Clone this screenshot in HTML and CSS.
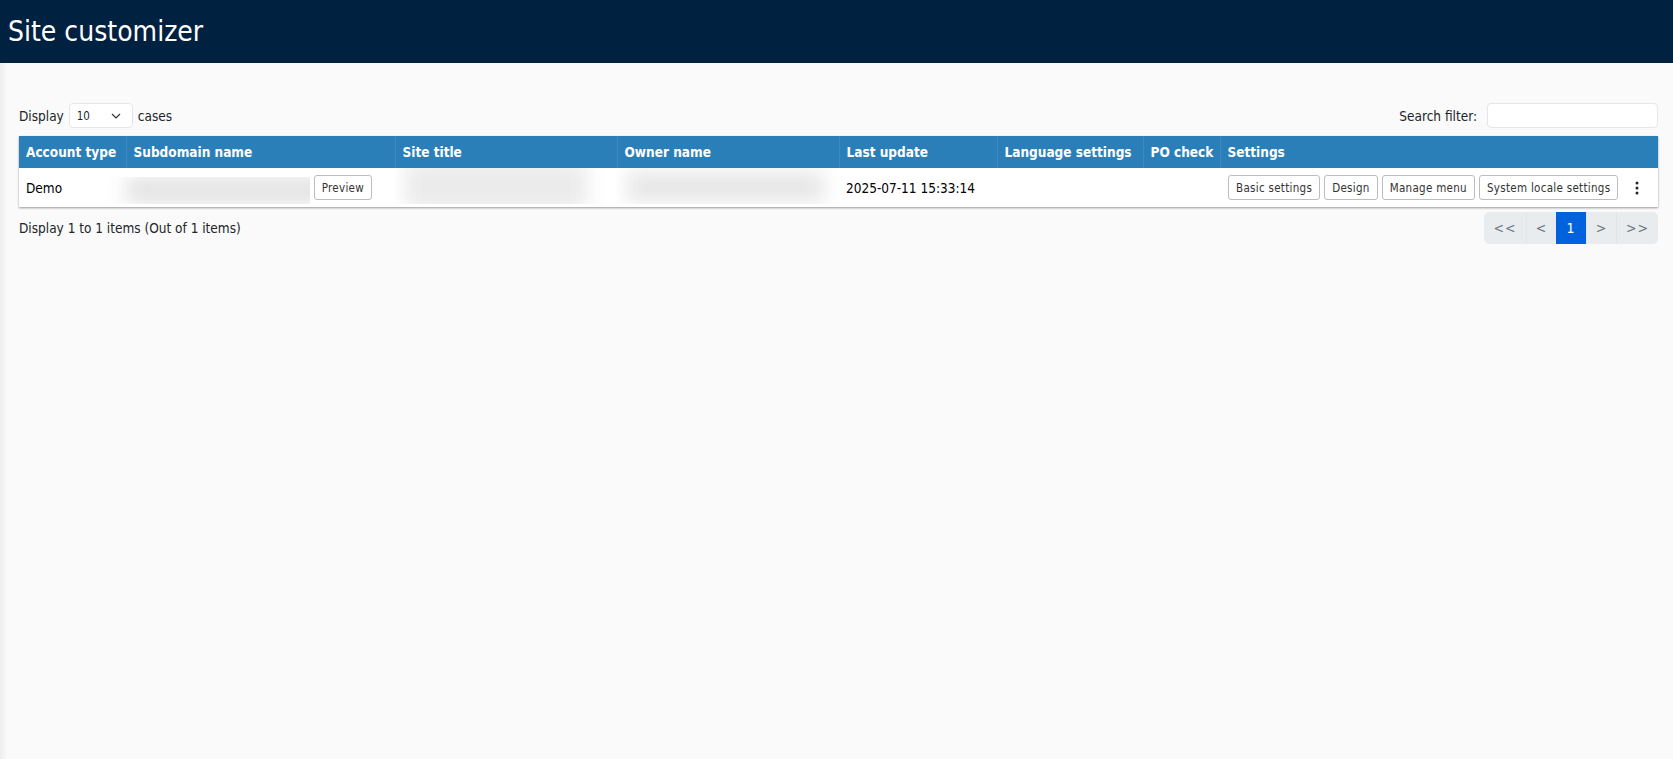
FILE: index.html
```html
<!DOCTYPE html>
<html lang="en">
<head>
<meta charset="utf-8">
<title>Site customizer</title>
<link rel="stylesheet" href="styles.css">
</head>
<body>
<header class="topbar"><h1 class="title">Site customizer</h1></header>
<main class="content">
  <div class="toolbar">
    <label class="length">Display
      <span class="select"><span>10</span>
        <svg class="chev" width="10" height="6" viewBox="0 0 10 6"><path d="M1 1l4 4 4-4" fill="none" stroke="#333" stroke-width="1.2"/></svg>
      </span>
      cases</label>
    <label class="search">Search filter:<span class="input"></span></label>
  </div>
  <table class="grid">
    <colgroup>
      <col class="c1"><col class="c2"><col class="c3"><col class="c4"><col class="c5"><col class="c6"><col class="c7"><col class="c8">
    </colgroup>
    <thead>
      <tr><th>Account type</th><th>Subdomain name</th><th>Site title</th><th>Owner name</th><th>Last update</th><th>Language settings</th><th>PO check</th><th>Settings</th></tr>
    </thead>
    <tbody>
      <tr>
        <td>Demo</td>
        <td class="sub"><div class="subwrap"><div class="mask m-sub"><i></i></div><button class="btn">Preview</button></div></td>
        <td class="blurcell"><div class="mask m-title"><i></i></div></td>
        <td class="blurcell"><div class="mask m-owner"><i></i></div></td>
        <td>2025-07-11 15:33:14</td>
        <td></td>
        <td></td>
        <td class="actions"><div class="actwrap">
          <button class="btn">Basic settings</button><button class="btn">Design</button><button class="btn">Manage menu</button><button class="btn">System locale settings</button>
          <svg class="kebab" width="4" height="14" viewBox="0 0 4 14"><circle cx="2" cy="2" r="1.5"/><circle cx="2" cy="7" r="1.5"/><circle cx="2" cy="12" r="1.5"/></svg>
        </div></td>
      </tr>
    </tbody>
  </table>
  <div class="footer">
    <div class="info">Display 1 to 1 items (Out of 1 items)</div>
    <nav class="pager"><a class="pg w1">&lt;&lt;</a><a class="pg w2">&lt;</a><a class="pg w3 on">1</a><a class="pg w4">&gt;</a><a class="pg w5">&gt;&gt;</a></nav>
  </div>
</main>
</body>
</html>
```
FILE: styles.css
```css
* { box-sizing: border-box; }
html, body { height: 100%; }
body {
  margin: 0;
  background: #fafafa;
  color: #212529;
  font-family: "DejaVu Sans Condensed", "DejaVu Sans", sans-serif;
  font-stretch: condensed;
  font-size: 13.5px;
  overflow: hidden;
}
.topbar { height: 63px; background: #002140; display: flex; align-items: center; padding-left: 8px; }
.title { margin: 0; font-size: 28px; font-weight: 400; color: #fff; }
.content {
  height: calc(100% - 63px);
  padding: 40px 15px 0 19px;
  background: linear-gradient(90deg, #eeeeee 0, #fafafa 8px);
}
.toolbar { display: flex; justify-content: space-between; align-items: center; height: 25px; margin-bottom: 8px; }
.length { display: flex; align-items: center; gap: 5px; }
.select {
  width: 64px; height: 25px; background: #fff; border: 1px solid #e4e6e8; border-radius: 4px;
  display: flex; align-items: center; justify-content: space-between; padding: 0 11px 0 7px;
  font-size: 11.5px; margin-right: 0;
}
.search { display: flex; align-items: center; gap: 10px; }
.input { width: 171px; height: 25px; background: #fff; border: 1px solid #e4e6e8; border-radius: 4px; }
.grid {
  width: 1639px; table-layout: fixed; border-collapse: collapse; background: #fff;
  box-shadow: 0 1px 2px rgba(0,0,0,.4);
}
.c1 { width: 107px; } .c2 { width: 269px; } .c3 { width: 222px; } .c4 { width: 222px; }
.c5 { width: 158px; } .c6 { width: 146px; } .c7 { width: 77px; } .c8 { width: 438px; }
th {
  height: 32px; padding: 0 7px; background: #2b7fb9; color: #fff; text-align: left; font-weight: 700;
  font-size: 13.5px; white-space: nowrap; border-left: 1px solid #3b89bf; overflow: hidden;
}
th:first-child { border-left: 0; }
td { height: 39px; padding: 0 7px; color: #000; white-space: nowrap; }
td.sub, td.blurcell { padding: 0; }
.subwrap { display: flex; align-items: center; justify-content: flex-end; padding-right: 23px; height: 39px; position: relative; }
.mask { overflow: hidden; position: absolute; top: 0; bottom: 0; }
.subwrap .mask { top: 9px; bottom: 3px; }
.mask i { display: block; position: absolute; inset: 0; filter: blur(10px); }
.blurcell { position: relative; }
.blurcell .mask { left: 0; right: 0; bottom: 3px; }
.m-sub { left: -20px; width: 204px; }
.m-sub i { background: #e2e2e2; left: 20px; right: -20px; }
.m-title i { background: #ebebeb; left: 10px; right: 30px; top: -6px; bottom: -6px; }
.m-owner i { background: #e6e6e6; left: 10px; right: 15px; top: 4px; bottom: 2px; }
.btn {
  height: 25px; padding: 0 7px; background: #fff; border: 1px solid #bdbdbd; border-radius: 3px;
  font: inherit; font-size: 11.5px; color: #333; white-space: nowrap; letter-spacing: .3px;
}
.actions { padding: 0 0 0 8px; }
.actwrap { display: flex; align-items: center; gap: 4px; }
.kebab { margin-left: 13px; fill: #212529; }
.footer { display: flex; justify-content: space-between; align-items: center; margin-top: 5px; height: 32px; }
.pager { display: flex; width: 174px; height: 32px; border-radius: 5px; overflow: hidden; background: #e9ecef; }
.pg { display: flex; align-items: center; justify-content: center; color: #6c757d; font-size: 14px; border-left: 1px solid #e3e6e9; letter-spacing: 1px; }
.pg:first-child { border-left: 0; }
.w1 { width: 42px; } .w2 { width: 30px; } .w3 { width: 30px; } .w4 { width: 30px; } .w5 { width: 42px; }
.pg.on { background: #0062dc; color: #fff; border-left: 0; }
```
